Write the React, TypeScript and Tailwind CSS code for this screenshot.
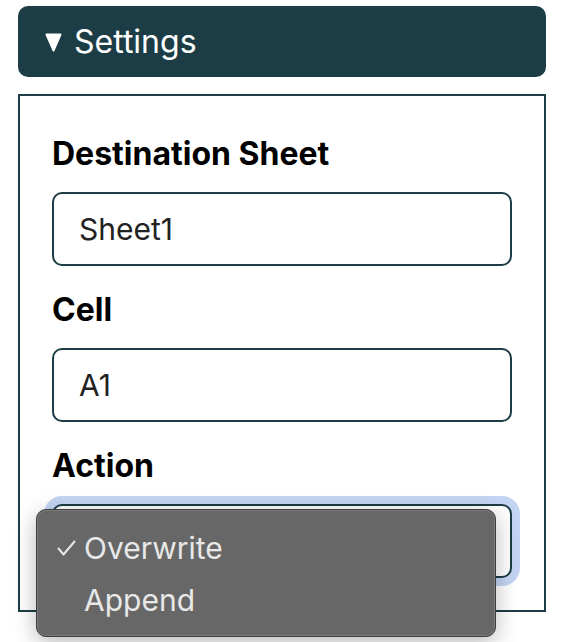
const teal = '#1c3d45';

function Field({ label, value }: { label: string; value: string }) {
  return (
    <div className="flex flex-col">
      <label className="text-[32px] font-bold leading-[36px] text-black mb-5">{label}</label>
      <input
        readOnly
        value={value}
        className="h-[74px] w-full rounded-[10px] border-2 border-[#1c3d45] bg-white px-[25px] text-[30px] text-[#222] outline-none"
      />
    </div>
  );
}

function CheckIcon() {
  return (
    <svg className="w-[19px] h-[16px]" viewBox="0 0 19 16" fill="none">
      <path d="M1.5 8.5 L6.5 14.5 L17.5 1.5" stroke="#e8e8e8" strokeWidth={2} strokeLinecap="round" strokeLinejoin="round" />
    </svg>
  );
}

export default function App() {
  const action = 'Overwrite';
  const options = ['Overwrite', 'Append'];

  return (
    <div className="min-h-[642px] bg-white pl-[18px] pr-[22px] pt-[6px] font-['Inter',sans-serif]">
      <div
        className="flex h-[71px] items-center gap-[12px] rounded-[10px] pl-[27px] text-white"
        style={{ backgroundColor: teal }}
      >
        <svg className="w-[17px] h-[19px] mt-[1px]" viewBox="0 0 17 19">
          <path d="M1.5 1.5 L15.5 1.5 L8.5 17.5 Z" fill="white" stroke="white" strokeWidth={2} strokeLinejoin="round" />
        </svg>
        <span className="text-[32px] leading-none">Settings</span>
      </div>

      <div className="mt-[17px] border-2 border-[#1c3d45] px-8 pt-10 pb-8">
        <div className="flex flex-col gap-[26px]">
          <Field label="Destination Sheet" value="Sheet1" />
          <Field label="Cell" value="A1" />
          <div className="flex flex-col">
            <label className="text-[32px] font-bold leading-[36px] text-black mb-5">Action</label>
            <div className="relative">
              <div className="h-[74px] w-full rounded-[10px] border-2 border-[#1c3d45] bg-white shadow-[0_0_0_8px_#c4d5f3]" />
              <div className="absolute left-[-16px] top-[5px] w-[460px] rounded-[10px] border border-[#3d3d3d] bg-[#676767] pt-[12px] pb-[10px] shadow-[inset_0_0_0_1px_rgba(255,255,255,0.14),0_6px_22px_rgba(0,0,0,0.28)]">
                {options.map((o) => (
                  <div key={o} className="relative flex h-[52px] items-center pl-[47px] text-[30px] text-[#e8e8e8]">
                    {o === action && (
                      <span className="absolute left-[20px] top-[18px] flex">
                        <CheckIcon />
                      </span>
                    )}
                    {o}
                  </div>
                ))}
              </div>
            </div>
          </div>
        </div>
      </div>
    </div>
  );
}
